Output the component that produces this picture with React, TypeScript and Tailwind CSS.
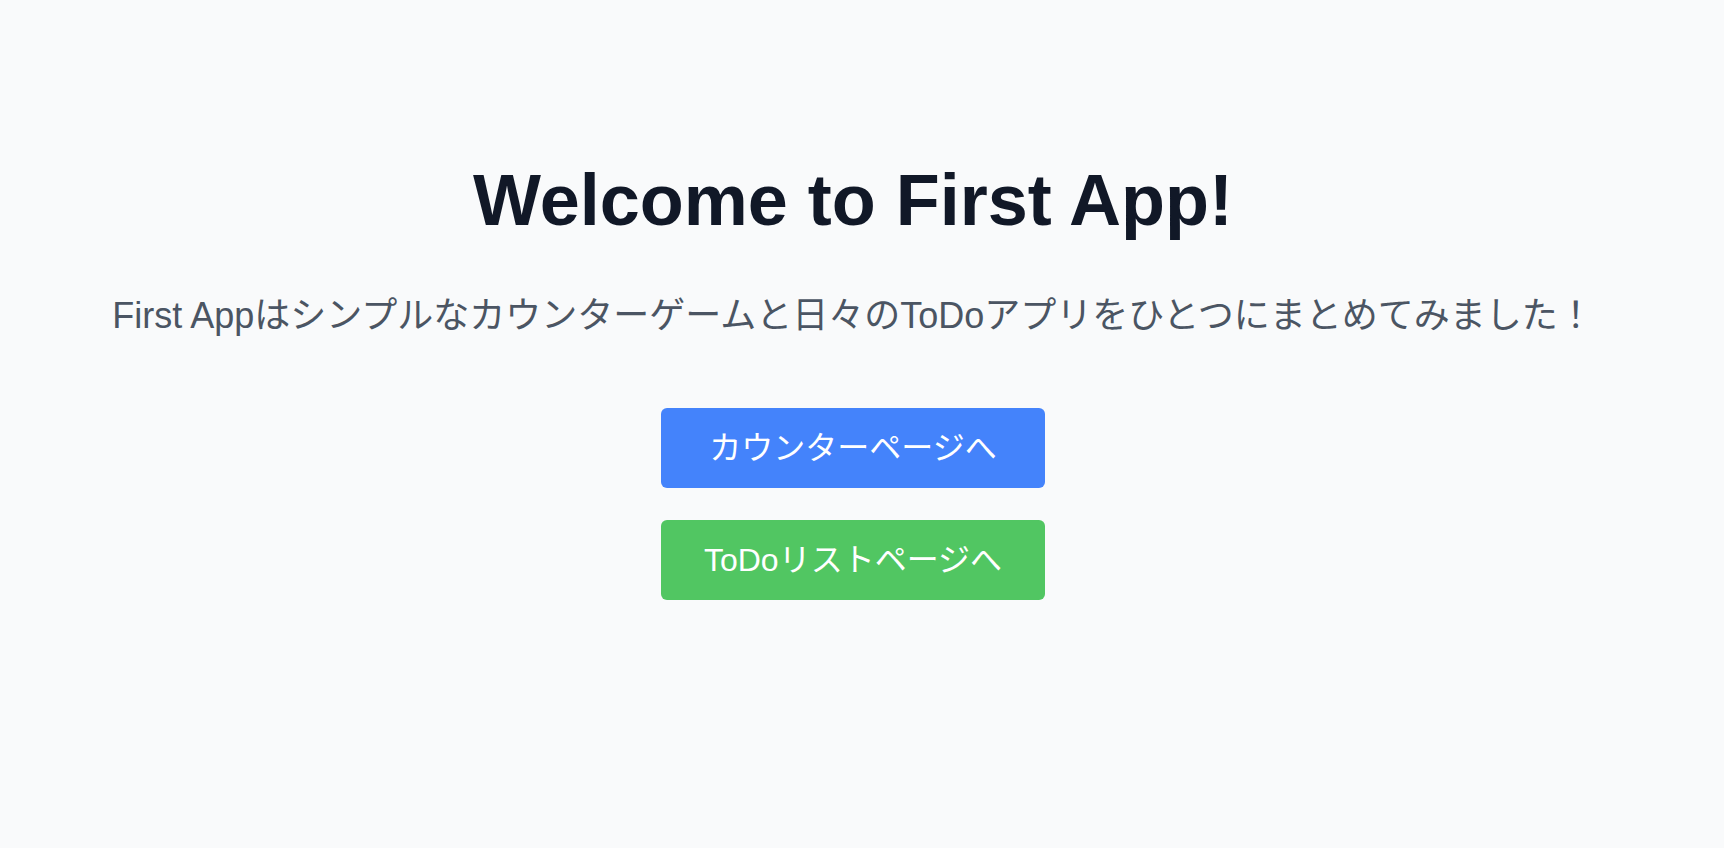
export default function App() {
  return (
    <div className="min-h-screen bg-[#f9fafb] pr-[18px] pt-[164px] flex flex-col items-center font-['Liberation_Sans','Noto_Sans_CJK_JP',sans-serif]">
      <h1 className="text-7xl font-bold text-[#111827]">Welcome to First App!</h1>
      <p className="mt-[60px] text-4xl text-[#4b5563]">
        First Appはシンプルなカウンターゲームと日々のToDoアプリをひとつにまとめてみました！
      </p>
      <div className="mt-[72px] flex flex-col gap-8">
        <button className="w-96 h-20 rounded-md bg-[#4483fb] text-[32px] text-white">
          カウンターページへ
        </button>
        <button className="w-96 h-20 rounded-md bg-[#51c662] text-[32px] text-white">
          ToDoリストページへ
        </button>
      </div>
    </div>
  );
}
